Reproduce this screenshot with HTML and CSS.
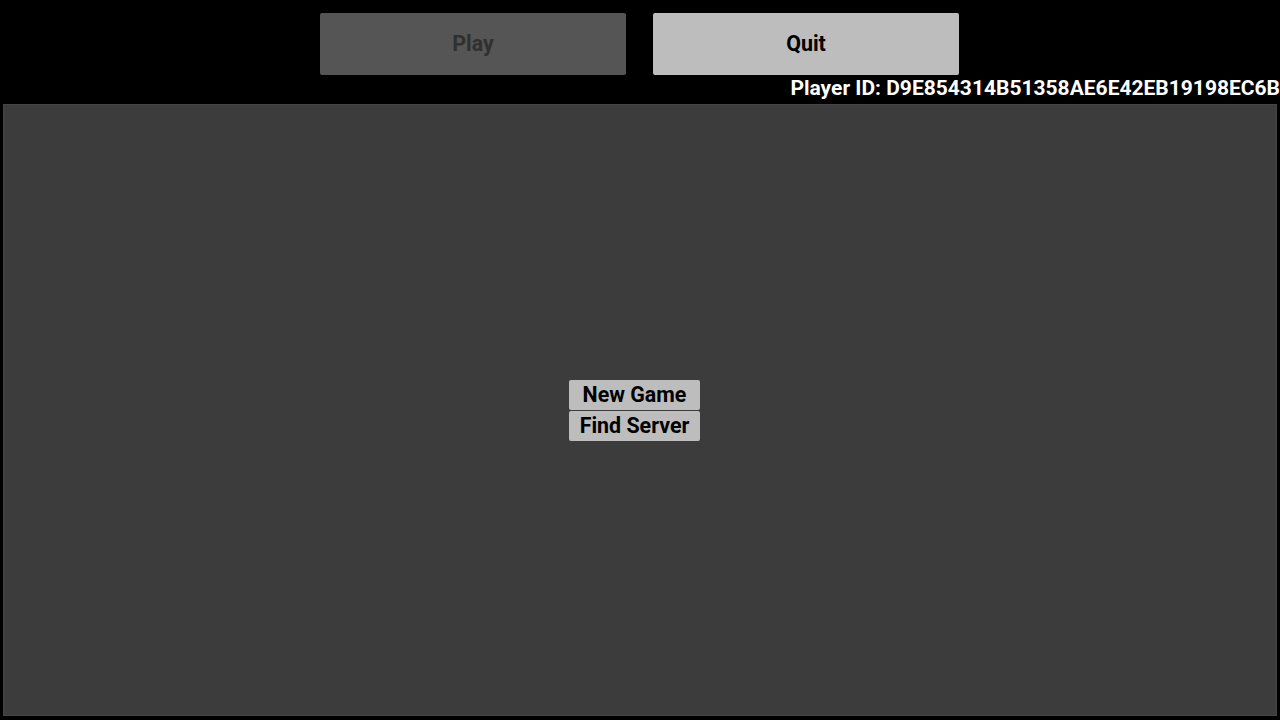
FILE: index.html
```html
<!DOCTYPE html>
<html>
<head>
<meta charset="utf-8">
<link rel="stylesheet" href="styles.css">
</head>
<body>
<div class="top">
  <button class="big disabled">Play</button>
  <button class="big">Quit</button>
</div>
<div class="pid">Player ID: D9E854314B51358AE6E42EB19198EC6B</div>
<div class="panel">
  <div class="menu">
    <button class="small">New Game</button>
    <button class="small">Find Server</button>
  </div>
</div>
</body>
</html>
```
FILE: styles.css
```css
html, body {
  margin: 0;
  padding: 0;
  background: #000;
  width: 1280px;
  height: 720px;
  overflow: hidden;
  font-family: Roboto, "Liberation Sans", sans-serif;
}
.top {
  display: flex;
  justify-content: center;
  gap: 27px;
  padding-top: 13px;
  padding-right: 1px;
}
button {
  font-family: Roboto, "Liberation Sans", sans-serif;
  font-weight: bold;
  border: none;
  padding: 0;
  margin: 0;
  cursor: default;
}
.big {
  width: 306px;
  height: 62px;
  border-radius: 2px;
  background: #bdbdbd;
  color: #000;
  font-size: 21.4px;
  line-height: 61px;
  padding-bottom: 1px;
}
.big.disabled {
  background: #555555;
  color: #303030;
}
.pid {
  height: 29px;
  text-align: right;
  color: #fff;
  font-weight: bold;
  font-size: 21px;
  line-height: 26px;
}
.panel {
  margin: 0 3px;
  height: 612px;
  box-sizing: border-box;
  background: #3c3c3c;
  border: 1px solid #444;
  display: flex;
  align-items: center;
  justify-content: center;
}
.menu {
  display: flex;
  flex-direction: column;
  gap: 1px;
  margin-right: 11px;
}
.small {
  width: 131px;
  height: 30px;
  border-radius: 2px;
  background: #bdbdbd;
  color: #000;
  font-size: 21.4px;
  line-height: 30px;
}
```
